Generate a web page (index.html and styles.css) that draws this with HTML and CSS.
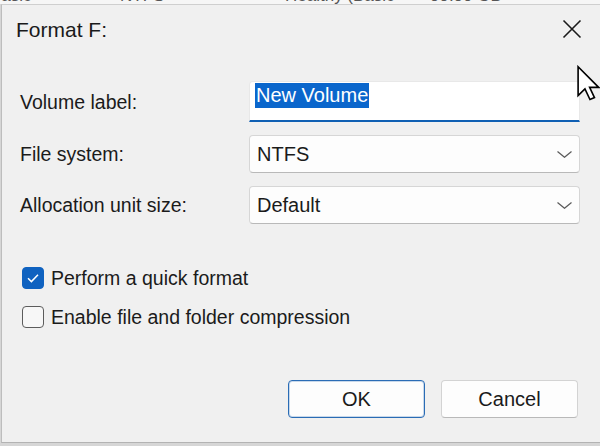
FILE: index.html
```html
<!DOCTYPE html>
<html>
<head>
<meta charset="utf-8">
<title>Format F:</title>
<link rel="stylesheet" href="styles.css">
</head>
<body>
<div class="strip">
  <div class="strip-text"><span class="w1">Basic</span><span class="w2">NTFS</span><span class="w3">Healthy (Basic</span><span class="w4">99.90 GB</span></div>
</div>
<div class="dialog">
  <div class="titlebar">
    <span class="title">Format F:</span>
    <svg class="close" viewBox="0 0 20 20" aria-hidden="true"><path d="M1.5 1.5 L18.5 18.5 M18.5 1.5 L1.5 18.5" stroke="#1a1a1a" stroke-width="1.6" fill="none"/></svg>
  </div>
  <div class="form">
    <span class="lbl">Volume label:</span>
    <div class="textfield"><span class="sel">New Volume</span></div>
    <span class="lbl">File system:</span>
    <div class="combo"><span>NTFS</span><svg class="chev" viewBox="0 0 15 7" aria-hidden="true"><path d="M0.5 0.5 L7.5 6.3 L14.5 0.5" stroke="#5a5a5a" stroke-width="1.2" fill="none"/></svg></div>
    <span class="lbl">Allocation unit size:</span>
    <div class="combo"><span>Default</span><svg class="chev" viewBox="0 0 15 7" aria-hidden="true"><path d="M0.5 0.5 L7.5 6.3 L14.5 0.5" stroke="#5a5a5a" stroke-width="1.2" fill="none"/></svg></div>
  </div>
  <div class="checks">
    <div class="check"><span class="box on"><svg viewBox="0 0 22 22" aria-hidden="true"><path d="M6 11.3 L9.4 14.6 L16 7.8" stroke="#fff" stroke-width="1.5" fill="none"/></svg></span><span>Perform a quick format</span></div>
    <div class="check"><span class="box"></span><span>Enable file and folder compression</span></div>
  </div>
  <div class="buttons">
    <button class="btn primary">OK</button>
    <button class="btn">Cancel</button>
  </div>
</div>
<svg class="cursor" viewBox="0 0 13 20" aria-hidden="true"><path d="M1 1 L1 17 L4.8 13.3 L7.6 19.2 L10.1 18.1 L7.4 12.4 L12.4 12.4 Z" fill="#fff" stroke="#000" stroke-width="0.9" stroke-linejoin="miter"/></svg>
</body>
</html>
```

FILE: styles.css
```css
html, body {
  margin: 0;
  width: 600px;
  height: 446px;
  overflow: hidden;
}
body {
  position: relative;
  background: #d6d6d6;
  font-family: "Liberation Sans", Arial, sans-serif;
  color: #1b1b1b;
}
.strip {
  height: 4px;
  overflow: hidden;
  background: #f6f6f6;
}
.strip-text {
  display: flex;
  white-space: nowrap;
  font-size: 17px;
  line-height: 20px;
  margin-top: -14px;
  color: #555;
}
.strip-text span { display: inline-block; overflow: hidden; }
.w1 { width: 130px; margin-left: -10px; text-align: right; padding-right: 90px; box-sizing: border-box; }
.w2 { width: 165px; }
.w3 { width: 145px; }
.w4 { width: 170px; }

.dialog {
  margin-left: 1px;
  border-left: 1px solid #bdbdbd;
  border-top: 1px solid #cfcfcf;
  border-bottom: 1px solid #b3b3b3;
  background: #f0f0f0;
  padding-bottom: 24px;
}
.titlebar {
  display: flex;
  justify-content: space-between;
  align-items: flex-start;
  padding: 13px 18px 0 14px;
}
.title {
  font-size: 21px;
  line-height: 24px;
  color: #1a1a1a;
}
.close {
  width: 20px;
  height: 20px;
  margin-top: 1px;
}
.form {
  display: grid;
  grid-template-columns: 229px 331px;
  grid-template-rows: 41px 38px 38px;
  row-gap: 13px;
  margin-top: 39px;
  padding-left: 18px;
  align-items: center;
}
.lbl {
  font-size: 19.5px;
  line-height: 24px;
}
.textfield {
  height: 41px;
  box-sizing: border-box;
  background: #fff;
  border: 1px solid #e8e8e8;
  border-bottom: 2px solid #0f5fb3;
  border-radius: 4px 4px 0 0;
  padding: 1px 0 0 5px;
}
.sel {
  display: inline-block;
  background: #0a66cc;
  color: #fff;
  font-size: 20px;
  line-height: 25px;
  padding: 0 1px;
}
.combo {
  height: 38px;
  box-sizing: border-box;
  background: #fdfdfd;
  border: 1px solid #d6d6d6;
  border-bottom-color: #b9b9b9;
  border-radius: 4px;
  display: flex;
  align-items: center;
  justify-content: space-between;
  padding: 0 7px 0 7px;
  font-size: 20px;
}
.chev {
  width: 15px;
  height: 7px;
}
.checks {
  margin-top: 43px;
  padding-left: 20px;
  display: flex;
  flex-direction: column;
  gap: 17px;
}
.check {
  display: flex;
  align-items: center;
  gap: 7px;
  height: 22px;
  font-size: 19.5px;
}
.box {
  width: 22px;
  height: 22px;
  box-sizing: border-box;
  border: 1.5px solid #5c5c5c;
  border-radius: 4px;
  background: #f7f7f7;
  flex: none;
  display: flex;
}
.box.on {
  background: #0f62c0;
  border-color: #0f62c0;
}
.box.on svg {
  width: 22px;
  height: 22px;
  margin: -1.5px;
}
.buttons {
  margin-top: 52px;
  display: flex;
  justify-content: flex-end;
  gap: 16px;
  padding-right: 22px;
}
.btn {
  width: 137px;
  height: 38px;
  box-sizing: border-box;
  font-family: inherit;
  font-size: 20px;
  color: #1a1a1a;
  background: #fdfdfd;
  border: 1px solid #d3d3d3;
  border-bottom-color: #b9b9b9;
  border-radius: 4px;
  padding: 0;
}
.btn.primary {
  border: 1px solid #2a6cb5;
  box-shadow: inset 0 0 0 1px rgba(42, 108, 181, 0.25);
}
.cursor {
  position: absolute;
  left: 576px;
  top: 65px;
  width: 24px;
  height: 36px;
}
```
